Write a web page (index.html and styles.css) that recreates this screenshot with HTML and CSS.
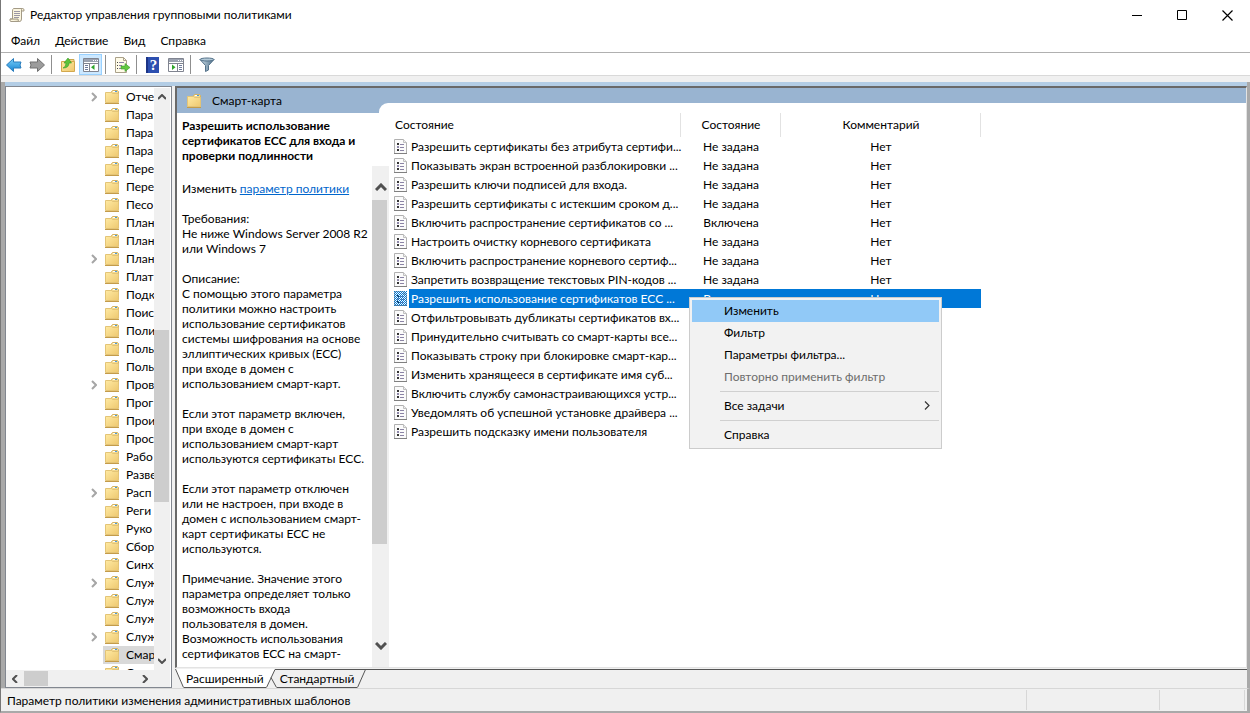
FILE: index.html
```html
<!DOCTYPE html>
<html lang="ru">
<head>
    <meta charset="UTF-8">
    <meta name="viewport" content="width=device-width, initial-scale=1.0">
    <title>Редактор управления групповыми политиками</title>
    <link rel="stylesheet" href="styles.css">
</head>
<body>
    <!-- shared icons -->
    <svg class="sprite" width="0" height="0">
        <defs>
            <linearGradient id="gold" x1="0" y1="0" x2="1" y2="1">
                <stop offset="0" stop-color="#ffeaa3"/>
                <stop offset="1" stop-color="#eec86f"/>
            </linearGradient>
            <linearGradient id="blue" x1="0" y1="0" x2="0" y2="1">
                <stop offset="0" stop-color="#7ad0fa"/>
                <stop offset="1" stop-color="#1583d2"/>
            </linearGradient>
            <linearGradient id="steel" x1="0" y1="0" x2="1" y2="0">
                <stop offset="0" stop-color="#cfe0ea"/>
                <stop offset="1" stop-color="#4d6f8a"/>
            </linearGradient>
            <pattern id="dither" width="2" height="2" patternUnits="userSpaceOnUse">
                <path d="M0 0h1v1H0zM1 1h1v1H1z" fill="#0078d7"/>
            </pattern>
            <symbol id="folder" viewBox="0 0 16 16">
                <path d="M7.5 3.5v-1l1-1h5l1 1v3h-7z" fill="#f3d98f" stroke="#d3b263"/>
                <path d="M9 2.5h2" stroke="#fff"/>
                <path d="M11 2.5h2" stroke="#4a9bd8"/>
                <path d="M1.5 3.5h6l1 1h6v9h-13z" fill="url(#gold)" stroke="#e3c477"/>
                <path d="M1 14.5h14" stroke="#c39b4a"/>
            </symbol>
            <symbol id="setting" viewBox="0 0 14 16">
                <path d="M.5 .5h9l3 3v11H.5z" fill="#fbfbfb" stroke="#b0b0b0"/>
                <path d="M9.5 .5v3h3" fill="#eee" stroke="#c0c0c0"/>
                <path d="M0 14.5h13" stroke="#808080"/>
                <path d="M3 4h2v2H3zM3 10h2v2H3z" fill="#333"/>
                <path d="M3 7h2v2H3z" fill="#8d86a8"/>
                <path d="M6 5.500h4M6 8.500h4M6 11.500h4" stroke="#8b84a5"/>
            </symbol>
            <symbol id="expand" viewBox="0 0 6 10">
                <path d="M1 1l4 4-4 4" fill="none" stroke="#a6a6a6" stroke-width="2"/>
            </symbol>
        </defs>
    </svg>

    <div class="window">
        <header class="titlebar">
            <svg class="app-icon" width="16" height="16" viewBox="0 0 16 16">
                <path d="M4.500 1.500h9q2 0 1.500 2.500h-2.500v8q0 2.500-2 2.500H2q-1.500 0-1-2.500h2.500V4q0-2 1-2.500z" fill="#fbf5df" stroke="#a39a86"/>
                <path d="M12.500 4V2.500q0-1 1-1M1 12h8q0 2.500 1.500 2.500" fill="#e5dcc0" stroke="#a39a86"/>
                <path d="M5 4.500h6M5 6.500h6M5 8.500h6M5 10.500h5" stroke="#9c97a5"/>
            </svg>
            <h1>Редактор управления групповыми политиками</h1>
            <div class="window-buttons">
                <button type="button" aria-label="Свернуть"><svg width="11" height="11"><path d="M0 5.500h10" stroke="#000"/></svg></button>
                <button type="button" aria-label="Развернуть"><svg width="11" height="11"><path d="M.5 .5h9v9h-9z" fill="none" stroke="#000"/></svg></button>
                <button type="button" aria-label="Закрыть"><svg width="11" height="11"><path d="M.5 .5l10 10M10.500 .5l-10 10" stroke="#000" stroke-width="1.200"/></svg></button>
            </div>
        </header>

        <nav class="menubar">
            <button type="button">Файл</button>
            <button type="button">Действие</button>
            <button type="button">Вид</button>
            <button type="button">Справка</button>
        </nav>

        <div class="toolbar">
            <button type="button" aria-label="Назад">
                <svg width="16" height="16" viewBox="0 0 16 16"><path d="M.5 8L7.500 1.500v3.500h7.500l-1 3 1 3H7.500v3.500z" fill="url(#blue)" stroke="#2a7dbd"/></svg>
            </button>
            <button type="button" aria-label="Вперед">
                <svg width="16" height="16" viewBox="0 0 16 16"><path d="M15.500 8L8.500 1.500v3.500H1l1 3-1 3h7.500v3.500z" fill="#9c9c9c" stroke="#707070"/></svg>
            </button>
            <span class="divider"></span>
            <button type="button" aria-label="На уровень вверх">
                <svg width="16" height="16" viewBox="0 0 16 16">
                    <path d="M8.500 4V2.500h5.500v3" fill="#f3d98f" stroke="#c9a64e"/>
                    <path d="M1.500 4.500h13v10h-13z" fill="url(#gold)" stroke="#d3a84e"/>
                    <path d="M3 11q3-1 3-5H4L8 1l3.500 5H9q0 5-6 5z" fill="#5cc23a" stroke="#2f9a25" stroke-width=".6"/>
                </svg>
            </button>
            <button type="button" class="active" aria-label="Дерево консоли">
                <svg width="16" height="16" viewBox="0 0 16 16">
                    <path d="M.5 1.500h15v13H.5z" fill="#fff" stroke="#808490"/>
                    <path d="M1 2h14v3H1z" fill="#9ba2b0"/>
                    <path d="M10 3.500h1M12 3.500h1M14 3.500h1" stroke="#fff"/>
                    <path d="M1 6.500h14M6.500 6v8" stroke="#808490"/>
                    <path d="M2 8.500h3M2 10.500h3M2 12.500h3" stroke="#6f7c9c"/>
                    <path d="M11.500 7.500v5.500L8 10.250z" fill="#2fa52b"/>
                </svg>
            </button>
            <span class="divider"></span>
            <button type="button" aria-label="Экспортировать список">
                <svg width="16" height="16" viewBox="0 0 16 16">
                    <path d="M1.500 .5h8l3 3v12h-11z" fill="#fffbe8" stroke="#aaa18a"/>
                    <path d="M9.500 .5v3h3" fill="none" stroke="#aaa18a"/>
                    <path d="M3 5.500h1M3 8.500h1M3 11.500h1" stroke="#444"/>
                    <path d="M5 5.500h5M5 8.500h3M5 11.500h3" stroke="#8b84a5"/>
                    <path d="M7 9h4V6.500l5 4-5 4V12H7z" fill="#61c83e" stroke="#39972b" stroke-width=".6"/>
                </svg>
            </button>
            <span class="divider"></span>
            <button type="button" class="help" aria-label="Справка"><span>?</span></button>
            <button type="button" aria-label="Область действий">
                <svg width="16" height="16" viewBox="0 0 16 16">
                    <path d="M.5 1.500h15v13H.5z" fill="#fff" stroke="#808490"/>
                    <path d="M1 2h14v3H1z" fill="#9ba2b0"/>
                    <path d="M10 3.500h1M12 3.500h1M14 3.500h1" stroke="#fff"/>
                    <path d="M1 6.500h14M9.500 6v8" stroke="#808490"/>
                    <path d="M11 8.500h3M11 10.500h3M11 12.500h3" stroke="#6f7c9c"/>
                    <path d="M4 7.500v5.500l3.500-2.750z" fill="#2fa52b"/>
                </svg>
            </button>
            <span class="divider"></span>
            <button type="button" aria-label="Фильтр">
                <svg width="16" height="16" viewBox="0 0 16 16">
                    <path d="M1 2.500l5.500 6v6l3-1.500V8.500l5.500-6z" fill="url(#steel)" stroke="#54728a"/>
                    <ellipse cx="8" cy="2.500" rx="7" ry="1.500" fill="#b4cad8" stroke="#54728a"/>
                </svg>
            </button>
        </div>

        <main class="workspace">
            <aside class="tree-pane">
                <div class="tree-view">
                    <ul class="tree">
                        <li><svg class="expand"><use href="#expand"/></svg><svg class="folder"><use href="#folder"/></svg><span>Отче</span></li>
                        <li><svg class="folder"><use href="#folder"/></svg><span>Пара</span></li>
                        <li><svg class="folder"><use href="#folder"/></svg><span>Пара</span></li>
                        <li><svg class="folder"><use href="#folder"/></svg><span>Пара</span></li>
                        <li><svg class="folder"><use href="#folder"/></svg><span>Пере</span></li>
                        <li><svg class="folder"><use href="#folder"/></svg><span>Пере</span></li>
                        <li><svg class="folder"><use href="#folder"/></svg><span>Песо</span></li>
                        <li><svg class="folder"><use href="#folder"/></svg><span>План</span></li>
                        <li><svg class="folder"><use href="#folder"/></svg><span>План</span></li>
                        <li><svg class="expand"><use href="#expand"/></svg><svg class="folder"><use href="#folder"/></svg><span>План</span></li>
                        <li><svg class="folder"><use href="#folder"/></svg><span>Плат</span></li>
                        <li><svg class="folder"><use href="#folder"/></svg><span>Подк</span></li>
                        <li><svg class="folder"><use href="#folder"/></svg><span>Поис</span></li>
                        <li><svg class="folder"><use href="#folder"/></svg><span>Поли</span></li>
                        <li><svg class="folder"><use href="#folder"/></svg><span>Поль</span></li>
                        <li><svg class="folder"><use href="#folder"/></svg><span>Поль</span></li>
                        <li><svg class="expand"><use href="#expand"/></svg><svg class="folder"><use href="#folder"/></svg><span>Пров</span></li>
                        <li><svg class="folder"><use href="#folder"/></svg><span>Прог</span></li>
                        <li><svg class="folder"><use href="#folder"/></svg><span>Прои</span></li>
                        <li><svg class="folder"><use href="#folder"/></svg><span>Прос</span></li>
                        <li><svg class="folder"><use href="#folder"/></svg><span>Рабо</span></li>
                        <li><svg class="folder"><use href="#folder"/></svg><span>Разве</span></li>
                        <li><svg class="expand"><use href="#expand"/></svg><svg class="folder"><use href="#folder"/></svg><span>Расп</span></li>
                        <li><svg class="folder"><use href="#folder"/></svg><span>Реги</span></li>
                        <li><svg class="folder"><use href="#folder"/></svg><span>Руко</span></li>
                        <li><svg class="folder"><use href="#folder"/></svg><span>Сбор</span></li>
                        <li><svg class="folder"><use href="#folder"/></svg><span>Синх</span></li>
                        <li><svg class="expand"><use href="#expand"/></svg><svg class="folder"><use href="#folder"/></svg><span>Служ</span></li>
                        <li><svg class="folder"><use href="#folder"/></svg><span>Служ</span></li>
                        <li><svg class="folder"><use href="#folder"/></svg><span>Служ</span></li>
                        <li><svg class="expand"><use href="#expand"/></svg><svg class="folder"><use href="#folder"/></svg><span>Служ</span></li>
                        <li class="selected"><svg class="folder"><use href="#folder"/></svg><span>Смар</span></li>
                        <li><svg class="folder"><use href="#folder"/></svg><span>Со</span></li>
                    </ul>
                    <div class="scroll-v">
                        <svg width="8" height="6"><path d="M0 5l4-4 4 4" fill="none" stroke="#505050" stroke-width="2"/></svg>
                        <div class="track"><div class="thumb tree-thumb"></div></div>
                        <svg width="8" height="6"><path d="M0 1l4 4 4-4" fill="none" stroke="#505050" stroke-width="2"/></svg>
                    </div>
                </div>
                <div class="scroll-h">
                    <svg width="6" height="8"><path d="M5 0L1 4l4 4" fill="none" stroke="#505050" stroke-width="2"/></svg>
                    <div class="track"><div class="thumb"></div></div>
                    <svg width="6" height="8"><path d="M1 0l4 4-4 4" fill="none" stroke="#505050" stroke-width="2"/></svg>
                </div>
            </aside>

            <section class="content-pane">
                <div class="content">
                    <div class="description">
                        <h2 class="band"><svg class="folder"><use href="#folder"/></svg>Смарт-карта</h2>
                        <h3>Разрешить использование<br>сертификатов ECC для входа и<br>проверки подлинности</h3>
                        <div class="details">
                            <div class="details-text">
                                <p>Изменить <a href="#">параметр политики</a></p>
                                <p>Требования:<br>Не ниже Windows Server 2008 R2<br>или Windows 7</p>
                                <p>Описание:<br>С помощью этого параметра<br>политики можно настроить<br>использование сертификатов<br>системы шифрования на основе<br>эллиптических кривых (ECC)<br>при входе в домен с<br>использованием смарт-карт.</p>
                                <p>Если этот параметр включен,<br>при входе в домен с<br>использованием смарт-карт<br>используются сертификаты ECC.</p>
                                <p>Если этот параметр отключен<br>или не настроен, при входе в<br>домен с использованием смарт-<br>карт сертификаты ECC не<br>используются.</p>
                                <p>Примечание. Значение этого<br>параметра определяет только<br>возможность входа<br>пользователя в домен.<br>Возможность использования<br>сертификатов ECC на смарт-</p>
                            </div>
                            <div class="scroll-v large">
                                <svg width="12" height="8"><path d="M1 7l5-5 5 5" fill="none" stroke="#505050" stroke-width="3"/></svg>
                                <div class="track"><div class="thumb details-thumb"></div></div>
                                <svg width="12" height="8"><path d="M1 1l5 5 5-5" fill="none" stroke="#505050" stroke-width="3"/></svg>
                            </div>
                        </div>
                    </div>

                    <div class="list">
                        <div class="list-body">
                            <table>
                                <colgroup>
                                    <col class="col-icon"><col class="col-name"><col class="col-state"><col class="col-comment">
                                </colgroup>
                                <thead>
                                    <tr><th colspan="2">Состояние</th><th>Состояние</th><th>Комментарий</th></tr>
                                </thead>
                                <tbody>
                                    <tr><td><svg class="setting"><use href="#setting"/></svg></td><td>Разрешить сертификаты без атрибута сертифи...</td><td>Не задана</td><td>Нет</td></tr>
                                    <tr><td><svg class="setting"><use href="#setting"/></svg></td><td>Показывать экран встроенной разблокировки ...</td><td>Не задана</td><td>Нет</td></tr>
                                    <tr><td><svg class="setting"><use href="#setting"/></svg></td><td>Разрешить ключи подписей для входа.</td><td>Не задана</td><td>Нет</td></tr>
                                    <tr><td><svg class="setting"><use href="#setting"/></svg></td><td>Разрешить сертификаты с истекшим сроком д...</td><td>Не задана</td><td>Нет</td></tr>
                                    <tr><td><svg class="setting"><use href="#setting"/></svg></td><td>Включить распространение сертификатов со ...</td><td>Включена</td><td>Нет</td></tr>
                                    <tr><td><svg class="setting"><use href="#setting"/></svg></td><td>Настроить очистку корневого сертификата</td><td>Не задана</td><td>Нет</td></tr>
                                    <tr><td><svg class="setting"><use href="#setting"/></svg></td><td>Включить распространение корневого сертиф...</td><td>Не задана</td><td>Нет</td></tr>
                                    <tr><td><svg class="setting"><use href="#setting"/></svg></td><td>Запретить возвращение текстовых PIN-кодов ...</td><td>Не задана</td><td>Нет</td></tr>
                                    <tr class="selected"><td><svg class="setting"><use href="#setting"/><rect width="13" height="15" fill="url(#dither)"/></svg></td><td>Разрешить использование сертификатов ECC ...</td><td>Включена</td><td>Нет</td></tr>
                                    <tr><td><svg class="setting"><use href="#setting"/></svg></td><td>Отфильтровывать дубликаты сертификатов вх...</td><td></td><td></td></tr>
                                    <tr><td><svg class="setting"><use href="#setting"/></svg></td><td>Принудительно считывать со смарт-карты все...</td><td></td><td></td></tr>
                                    <tr><td><svg class="setting"><use href="#setting"/></svg></td><td>Показывать строку при блокировке смарт-кар...</td><td></td><td></td></tr>
                                    <tr><td><svg class="setting"><use href="#setting"/></svg></td><td>Изменить хранящееся в сертификате имя суб...</td><td></td><td></td></tr>
                                    <tr><td><svg class="setting"><use href="#setting"/></svg></td><td>Включить службу самонастраивающихся устр...</td><td></td><td></td></tr>
                                    <tr><td><svg class="setting"><use href="#setting"/></svg></td><td>Уведомлять об успешной установке драйвера ...</td><td></td><td></td></tr>
                                    <tr><td><svg class="setting"><use href="#setting"/></svg></td><td>Разрешить подсказку имени пользователя</td><td></td><td></td></tr>
                                </tbody>
                            </table>

                            <div class="context-menu">
                                <button type="button" class="hover">Изменить</button>
                                <button type="button">Фильтр</button>
                                <button type="button">Параметры фильтра...</button>
                                <button type="button" disabled>Повторно применить фильтр</button>
                                <hr>
                                <button type="button">Все задачи<svg width="6" height="9"><path d="M1 .5l4 4-4 4" fill="none" stroke="#333" stroke-width="1.200"/></svg></button>
                                <hr>
                                <button type="button">Справка</button>
                            </div>
                        </div>
                    </div>
                </div>

                <div class="tabs">
                    <svg width="9" height="19"><path d="M0 0h9v18H8z" fill="#fff"/><path d="M.5 0l8 18.500" stroke="#555"/></svg>
                    <button type="button" class="current">Расширенный</button>
                    <svg width="11" height="19"><path d="M0 0h9L1 18H0z" fill="#fff"/><path d="M.5 18.500L9 .5h2M5 8.500l5.500 10" fill="none" stroke="#555"/></svg>
                    <button type="button">Стандартный</button>
                    <svg width="9" height="19"><path d="M0 .5h9M.5 18.500L8.500 .5" stroke="#555"/></svg>
                    <span class="tabs-rest"></span>
                </div>
            </section>
        </main>

        <footer class="statusbar">
            <span class="status-text">Параметр политики изменения административных шаблонов</span>
            <span class="status-cell"></span>
            <span class="status-cell small"></span>
        </footer>
    </div>
</body>
</html>
```
FILE: styles.css
```css
* {
    box-sizing: border-box;
}
body {
    margin: 0;
    font-family: Lato, "Noto Sans", sans-serif;
    font-size: 12px;
    line-height: 15px;
    color: #000;
    background-color: #fff;
}
button {
    font: inherit;
    color: inherit;
    background: none;
    border: none;
    padding: 0;
}
h1, h2, h3, p, ul {
    margin: 0;
    padding: 0;
    font-size: 12px;
    font-weight: normal;
}
svg {
    display: block;
    flex: none;
}
.sprite {
    position: absolute;
}
.window {
    display: flex;
    flex-direction: column;
    height: 100vh;
    border-left: 1px solid #777;
    border-bottom: 2px solid #a9a9a9;
    overflow: hidden;
}

/* title and menu */
.titlebar {
    display: flex;
    align-items: center;
    height: 30px;
    padding-left: 8px;
    gap: 5px;
}
.titlebar h1 {
    padding-bottom: 2px;
}
.window-buttons {
    display: flex;
    margin-left: auto;
}
.window-buttons button {
    display: flex;
    align-items: center;
    justify-content: center;
    width: 45px;
    height: 30px;
}
.menubar {
    display: flex;
    height: 23px;
    padding-left: 3px;
    gap: 1px;
    border-bottom: 1px solid #b0b0b0;
}
.menubar button {
    padding: 0 7px 2px;
}

/* toolbar */
.toolbar {
    display: flex;
    align-items: center;
    height: 23px;
    padding: 1px 0 0 1px;
    border-bottom: 1px solid #d9d9d9;
}
.toolbar button {
    display: flex;
    align-items: center;
    justify-content: center;
    width: 23px;
    height: 21px;
}
.toolbar .active {
    background-color: #cce8ff;
    border: 1px solid #99d1ff;
}
.toolbar .help span {
    width: 13px;
    height: 16px;
    background-color: #2c4fb0;
    border-left: 2px solid #1c3486;
    color: #fff;
    font-family: "Liberation Serif", serif;
    font-size: 15px;
    font-weight: bold;
    line-height: 16px;
}
.divider {
    width: 1px;
    height: 19px;
    margin: 0 4px 0 3px;
    background-color: #8f8f8f;
}

/* panes */
.workspace {
    display: flex;
    flex: 1;
    min-height: 0;
    margin-top: 6px;
    border: solid #a9a9a9;
    border-width: 0 3px 0 4px;
    background: linear-gradient(#b3cde5 4px, #f0f0f0 4px);
    padding-top: 4px;
    box-shadow: 0 -6px #f0f0f0;
}
.tree-pane {
    display: flex;
    flex-direction: column;
    width: 167px;
    margin-right: 3px;
    padding: 1px 1px 0 0;
    border: 1px solid #828790;
    background-color: #fff;
}
.tree-view {
    display: flex;
    flex: 1;
    min-height: 0;
}
.tree {
    flex: 1;
    min-width: 0;
    overflow: hidden;
    list-style: none;
}
.tree li {
    display: flex;
    align-items: center;
    height: 18px;
    padding-left: 97px;
}
.tree li span {
    padding: 0 0 2px 6px;
    white-space: nowrap;
}
.tree .selected {
    background: linear-gradient(90deg, #fff 97px, #d9d9d9 97px);
}
.folder {
    width: 16px;
    height: 16px;
    margin-left: 1px;
}
.expand {
    width: 6px;
    height: 10px;
    margin-left: -12px;
    margin-right: 6px;
}
.scroll-v {
    display: flex;
    flex-direction: column;
    align-items: center;
    width: 16px;
    padding: 6px 0;
    background-color: #f0f0f0;
}
.scroll-v .track {
    flex: 1;
    width: 100%;
    margin: 5px 0;
}
.scroll-h {
    display: flex;
    align-items: center;
    height: 17px;
    padding: 0 22px 0 6px;
    background-color: #f0f0f0;
}
.scroll-h .track {
    flex: 1;
    margin: 0 6px;
}
.thumb {
    width: 24px;
    height: 15px;
    background-color: #cdcdcd;
}
.tree-thumb {
    width: 15px;
    height: 172px;
    margin-top: 225px;
}
.large {
    width: 17px;
    padding: 17px 0;
}
.large .track {
    margin: 9px 0;
}
.details-thumb {
    width: 15px;
    height: 344px;
}
.content-pane {
    display: flex;
    flex-direction: column;
    flex: 1;
    min-width: 0;
}
.content {
    display: flex;
    flex: 1;
    min-height: 0;
    border: 1px solid #e3e3e3;
    border-top: 2px solid #696969;
    border-left: 2px solid #696969;
    background-color: #fff;
}
.description {
    display: flex;
    flex-direction: column;
    width: 212px;
}
.band {
    display: flex;
    align-items: center;
    height: 25px;
    padding-left: 8px;
    gap: 10px;
    background-color: #99b4d1;
}
.description h3 {
    padding: 5px 0 3px 5px;
    font-weight: bold;
    white-space: nowrap;
}
.details {
    position: relative;
    z-index: 1;
    display: flex;
    flex: 1;
    min-height: 0;
}
.details-text {
    flex: 1;
    min-width: 0;
    padding: 15px 0 0 5px;
    overflow: hidden;
    white-space: nowrap;
}
.details-text p {
    margin-bottom: 15px;
}
a {
    color: #0066cc;
}

/* settings list */
.list {
    flex: 1;
    min-width: 0;
    height: 25px;
    margin-left: -10px;
    padding-top: 15px;
    background-color: #99b4d1;
}
.list-body {
    position: relative;
    padding-left: 10px;
    border-top-left-radius: 9px;
    background-color: #fff;
}
table {
    width: 592px;
    table-layout: fixed;
    border-collapse: collapse;
}
.col-icon {
    width: 20px;
}
.col-name {
    width: 272px;
}
.col-state {
    width: 100px;
}
.col-comment {
    width: 200px;
}
th {
    height: 34px;
    padding: 8px 0 0;
    font-weight: normal;
    background: linear-gradient(#e2e2e2, #e2e2e2) right bottom / 1px 24px no-repeat;
}
th:first-child {
    padding-left: 6px;
    text-align: left;
}
td {
    height: 19px;
    padding: 0;
    text-align: center;
    white-space: nowrap;
}
td:nth-child(2) {
    padding-left: 2px;
    text-align: left;
}
tr.selected td:not(:first-child) {
    background-color: #0078d7;
    color: #fff;
}
.setting {
    width: 14px;
    height: 16px;
    margin-left: 5px;
}
.context-menu {
    position: absolute;
    left: 310px;
    top: 194px;
    width: 253px;
    padding: 2px;
    background-color: #f2f2f2;
    border: 1px solid #ccc;
}
.context-menu button {
    display: flex;
    align-items: center;
    justify-content: space-between;
    width: 100%;
    height: 22px;
    padding: 0 9px 2px 32px;
}
.context-menu .hover {
    background-color: #91c9f7;
}
.context-menu button:disabled {
    color: #6d6d6d;
}
.context-menu hr {
    margin: 3px 0 3px 28px;
    border: none;
    border-top: 1px solid #d0d0d0;
}

/* view tabs */
.tabs {
    display: flex;
    height: 19px;
    margin-top: 1px;
}
.tabs button {
    padding: 0 3px;
    border-top: 1px solid #555;
    border-bottom: 1px solid #555;
}
.tabs .current {
    padding: 0 2px;
    background-color: #fff;
    border-top-color: #fff;
}
.tabs-rest {
    flex: 1;
    border-top: 1px solid #555;
}

/* status bar */
.statusbar {
    display: flex;
    height: 23px;
    padding: 1px 2px 1px 6px;
    background-color: #f0f0f0;
    border-top: 1px solid #d7d7d7;
    border-right: 3px solid #a9a9a9;
}
.status-text {
    flex: 1;
    line-height: 21px;
}
.status-cell {
    width: 133px;
    border-left: 1px solid #d7d7d7;
}
.status-cell.small {
    width: 86px;
    border-right: 1px solid #d7d7d7;
}
```
